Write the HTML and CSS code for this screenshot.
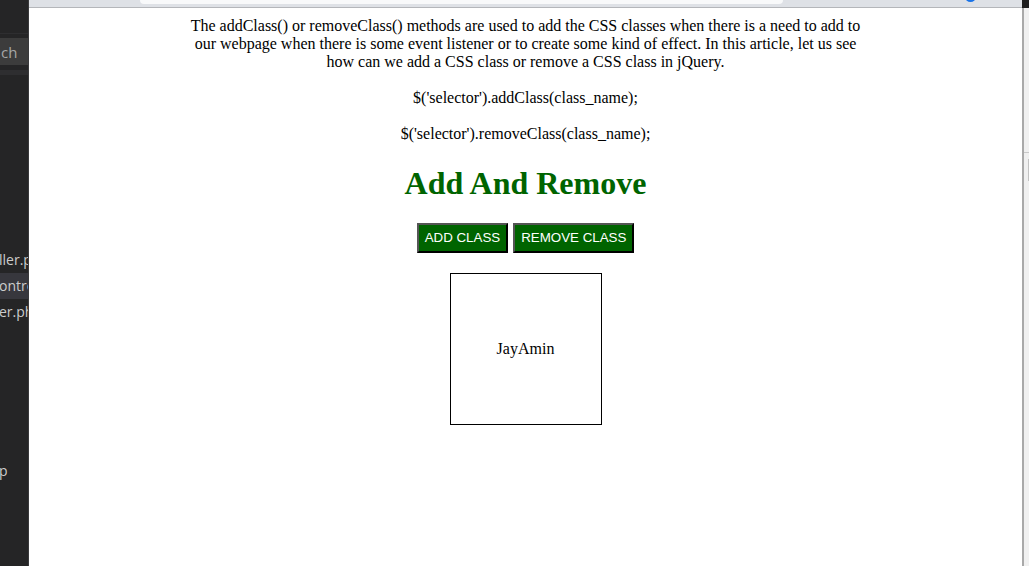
FILE: index.html
```html
<!DOCTYPE html>
<html>
<head>
<meta charset="utf-8">
<title>Add And Remove</title>
<link rel="stylesheet" href="styles.css">
</head>
<body>
<div class="screen">
  <aside class="sidebar">
    <div class="sb-top"></div>
    <div class="sb-search">ch</div>
    <div class="sb-files">
      <div class="sb-item">ller.php</div>
      <div class="sb-item active">ontroller</div>
      <div class="sb-item">er.php</div>
      <div class="sb-item last">p</div>
    </div>
  </aside>
  <main class="browser">
    <div class="toolbar">
      <div class="addr"></div>
      <div class="avatar"></div>
    </div>
    <div class="page">
      <div class="intro">
        <p>The addClass() or removeClass() methods are used to add the CSS classes when there is a need to add to our webpage when there is some event listener or to create some kind of effect. In this article, let us see how can we add a CSS class or remove a CSS class in jQuery.</p>
        <p>$('selector').addClass(class_name);</p>
        <p>$('selector').removeClass(class_name);</p>
      </div>
      <h1 class="title">Add And Remove</h1>
      <div class="actions">
        <button class="btn">ADD CLASS</button>
        <button class="btn">REMOVE CLASS</button>
      </div>
      <div class="box">JayAmin</div>
    </div>
  </main>
  <div class="rightstrip">
    <div class="rs-top"></div>
    <div class="rs-body">
      <div class="rs-head"></div>
      <div class="rs-bar"></div>
    </div>
  </div>
</div>
</body>
</html>
```

FILE: styles.css
```css
html, body {
  margin: 0;
  padding: 0;
  height: 100%;
  overflow: hidden;
}

.screen {
  display: flex;
  width: 1029px;
  height: 566px;
}

/* left editor sidebar */
.sidebar {
  width: 28px;
  flex: none;
  background: #252526;
  border-right: 1px solid #3a3a3c;
  overflow: hidden;
  font-family: "Open Sans", "DejaVu Sans", sans-serif;
  font-size: 14px;
  color: #cccccc;
  display: flex;
  flex-direction: column;
}

.sb-top {
  height: 33px;
  border-bottom: 1px solid #2e2e30;
  flex: none;
}

.sb-search {
  margin-top: 4px;
  height: 27px;
  line-height: 28px;
  background: #3c3c3c;
  color: #a6a6a6;
  white-space: nowrap;
  padding-left: 1px;
  font-size: 15px;
  border-bottom: 5px solid #252526;
  box-shadow: 0 5px 0 #2e2e30;
}

.sb-files {
  margin-top: 177px;
  display: flex;
  flex-direction: column;
}

.sb-item {
  height: 26px;
  line-height: 26px;
  white-space: nowrap;
  margin-left: -1px;
}

.sb-item.active {
  background: #37373d;
}

.sb-item.last {
  margin-top: 133px;
}

/* browser window */
.browser {
  flex: 1;
  display: flex;
  flex-direction: column;
  background: #ffffff;
  min-width: 0;
}

.toolbar {
  height: 7px;
  flex: none;
  background: #dee1e6;
  border-bottom: 1px solid #b4b6ba;
  display: flex;
  overflow: hidden;
}

.addr {
  margin-left: 111px;
  width: 643px;
  height: 4px;
  background: #f8f9fa;
  border-radius: 0 0 8px 8px;
}

.avatar {
  margin-left: 182px;
  margin-top: -9px;
  width: 11px;
  height: 11px;
  border-radius: 50%;
  background: #1a73e8;
}

.page {
  flex: 1;
  text-align: center;
  font-family: "Liberation Serif", "Times New Roman", serif;
  font-size: 16px;
  color: #000;
  padding-top: 9px;
}

.intro {
  width: 680px;
  margin: 0 auto;
  line-height: 18px;
}

.intro p {
  margin: 0 0 18px;
}

.intro p:last-child {
  margin-bottom: 0;
}

.title {
  margin: 22px 0 0;
  font-size: 32px;
  line-height: 36px;
  font-weight: bold;
  color: #006400;
}

.actions {
  margin-top: 22px;
  display: flex;
  justify-content: center;
  gap: 5px;
}

.btn {
  font-family: "Liberation Sans", Arial, sans-serif;
  font-size: 13.333px;
  line-height: 16px;
  color: #ffffff;
  background: #006400;
  border: 2px solid;
  border-color: #555555 #000000 #000000 #555555;
  padding: 5px 6px;
  margin: 0;
}

.box {
  margin: 20px auto 0;
  width: 150px;
  height: 150px;
  border: 1px solid #000;
  display: flex;
  align-items: center;
  justify-content: center;
}

/* right strip */
.rightstrip {
  width: 7px;
  flex: none;
  display: flex;
  flex-direction: column;
}

.rs-top {
  height: 8px;
  background: #1e1e1e;
}

.rs-body {
  flex: 1;
  background: #f0f0f0;
  border-left: 2px solid #a9a9a9;
}

.rs-head {
  height: 144px;
  border-bottom: 1px solid #c8c8c8;
}

.rs-bar {
  margin: 6px 0 0 4px;
  width: 2px;
  height: 22px;
  background: #c2c2c2;
}
```
